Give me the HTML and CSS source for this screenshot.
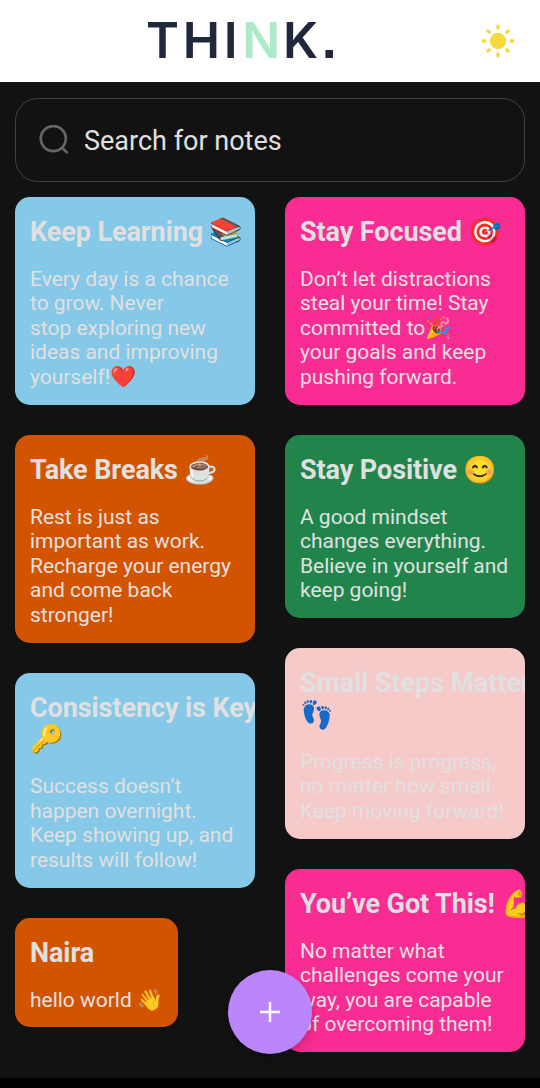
FILE: index.html
```html
<!DOCTYPE html>
<html lang="en">
<head>
<meta charset="utf-8">
<title>Think notes</title>
<link rel="stylesheet" href="styles.css">
</head>
<body>
<div class="screen">
  <header class="header">
    <h1 class="logo">THI<span class="accent">N</span>K<span class="dot">.</span></h1>
    <svg class="sun" viewBox="0 0 36 36">
      <circle cx="18" cy="18" r="8.2" fill="#f8d93b"/>
      <g stroke="#f8d93b" stroke-width="3.3" stroke-linecap="round">
        <path d="M18 3.2v1.8M18 31v1.8M3.2 18h1.8M31 18h1.8M8 8l1.2 1.2M26.8 26.8l1.2 1.2M8 28l1.2-1.2M26.8 9.2l1.2-1.2"/>
      </g>
    </svg>
  </header>
  <main class="content">
    <div class="search">
      <svg class="search-icon" viewBox="0 0 30 30" fill="none" stroke="#656565" stroke-width="2.7" stroke-linecap="round">
        <circle cx="14.3" cy="13.6" r="12.5"/><path d="M24.6 24.2l3.2 3.2"/>
      </svg>
      <span>Search for notes</span>
    </div>
    <div class="notes">
      <div class="column">
        <article class="note blue"><h2>Keep Learning 📚</h2><p>Every day is a chance<br>to grow. Never<br>stop exploring new<br>ideas and improving<br>yourself!❤️</p></article>
        <article class="note orange"><h2>Take Breaks ☕</h2><p>Rest is just as<br>important as work.<br>Recharge your energy<br>and come back<br>stronger!</p></article>
        <article class="note blue"><h2>Consistency is Key<br>🔑</h2><p>Success doesn’t<br>happen overnight.<br>Keep showing up, and<br>results will follow!</p></article>
        <article class="note orange compact"><h2>Naira</h2><p>hello world 👋</p></article>
      </div>
      <div class="column">
        <article class="note pink"><h2>Stay Focused 🎯</h2><p>Don’t let distractions<br>steal your time! Stay<br>committed to🎉<br>your goals and keep<br>pushing forward.</p></article>
        <article class="note green"><h2>Stay Positive 😊</h2><p>A good mindset<br>changes everything.<br>Believe in yourself and<br>keep going!</p></article>
        <article class="note rose"><h2>Small Steps Matter<br>👣</h2><p>Progress is progress,<br>no matter how small.<br>Keep moving forward!</p></article>
        <article class="note pink"><h2>You’ve Got This! 💪</h2><p>No matter what<br>challenges come your<br>way, you are capable<br>of overcoming them!</p></article>
      </div>
    </div>
  </main>
  <div class="nav-bar"></div>
  <button class="add" aria-label="Add note">
    <svg class="plus" viewBox="0 0 22 22" stroke="#fff" stroke-width="2.4"><path d="M11 1v20M1 11h20"/></svg>
  </button>
</div>
</body>
</html>
```
FILE: styles.css
```css
* { box-sizing: border-box; }
body { margin: 0; background: #121212; font-family: Roboto, "Noto Color Emoji", sans-serif; color: #e0e0e0; }
.screen { position: relative; height: 1088px; overflow: hidden; display: flex; flex-direction: column; }
.header { height: 82px; flex: none; background: #fff; display: flex; align-items: center; justify-content: space-between; padding: 0 24px 0 146px; }
.logo { margin: 0; padding-bottom: 2px; font: 600 50px/80px Inter, sans-serif; letter-spacing: 3.7px; color: #1f293b; white-space: nowrap; }
.accent { color: #aee9c8; margin-left: 1px; letter-spacing: 2.7px; }
.dot { font-family: "Liberation Sans", sans-serif; font-weight: 700; font-size: 54px; line-height: 1; }
.sun { width: 36px; height: 36px; }
.content { flex: 1; min-height: 0; padding: 15.5px 15px 0; }
.search { height: 84px; border: 1.5px solid #424242; border-radius: 22.5px; display: flex; align-items: center; gap: 15px; padding: 2px 23px 0; font-size: 27px; }
.search-icon { width: 30px; height: 30px; margin-top: -1px; }
.notes { display: flex; gap: 30px; margin-top: 15.5px; }
.column { width: 240px; display: flex; flex-direction: column; align-items: flex-start; gap: 30px; }
.note { width: 240px; padding: 20px 15px 15.3px; border-radius: 15px; overflow: hidden; }
.compact { width: 162.5px; }
.note h2 { margin: 0 0 18.2px; font-size: 27px; line-height: 31.8px; font-weight: 700; letter-spacing: -0.09px; white-space: nowrap; }
.note p { margin: 0; font-size: 21px; line-height: 24.5px; letter-spacing: -0.02px; white-space: nowrap; }
.blue { background: #85c8e8; }
.orange { background: #d35400; }
.pink { background: #f92c93; }
.green { background: #21854b; }
.rose { background: #f7caca; }
.nav-bar { height: 10px; flex: none; background: #000; }
.add { position: absolute; left: 228px; top: 970px; width: 84px; height: 84px; border: 0; border-radius: 50%; background: #bb86fc; display: flex; align-items: center; justify-content: center; padding: 0; box-shadow: 0 4px 9px rgba(0,0,0,.2); }
.plus { width: 22px; height: 22px; }
```
